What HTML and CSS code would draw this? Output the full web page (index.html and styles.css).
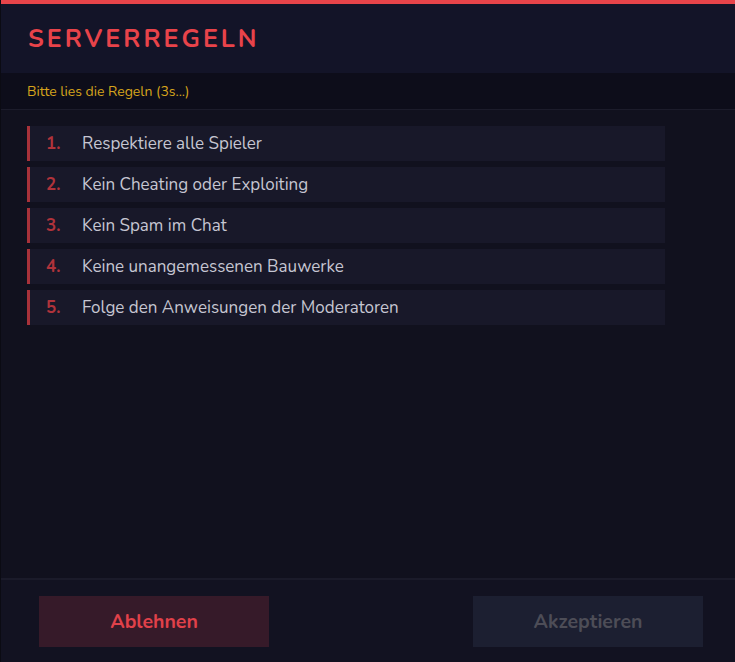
FILE: index.html
```html
<!DOCTYPE html>
<html lang="de">
<head>
<meta charset="utf-8">
<title>Serverregeln</title>
<link rel="stylesheet" href="styles.css">
</head>
<body>
<div class="panel">
  <div class="topbar"></div>
  <header class="header">
    <h1 class="title">SERVERREGELN</h1>
  </header>
  <div class="notice">Bitte lies die Regeln (3s...)</div>
  <main class="rules">
    <div class="rule"><span class="num">1.</span><span class="text">Respektiere alle Spieler</span></div>
    <div class="rule"><span class="num">2.</span><span class="text">Kein Cheating oder Exploiting</span></div>
    <div class="rule"><span class="num">3.</span><span class="text">Kein Spam im Chat</span></div>
    <div class="rule"><span class="num">4.</span><span class="text">Keine unangemessenen Bauwerke</span></div>
    <div class="rule"><span class="num">5.</span><span class="text">Folge den Anweisungen der Moderatoren</span></div>
  </main>
  <footer class="footer">
    <button class="btn btn-decline">Ablehnen</button>
    <button class="btn btn-accept" disabled>Akzeptieren</button>
  </footer>
</div>
</body>
</html>
```
FILE: styles.css
```css
* { box-sizing: border-box; }
html, body {
  margin: 0;
  padding: 0;
  background: #11111e;
  font-family: "Nunito", "Lato", "Open Sans", sans-serif;
}
.panel {
  width: 735px;
  height: 662px;
  display: flex;
  flex-direction: column;
  border-left: 1px solid #0b0b13;
  background: #11111e;
}
.topbar {
  height: 4px;
  background: #e8444a;
  flex: none;
}
.header {
  height: 69px;
  flex: none;
  background: #131428;
  display: flex;
  align-items: center;
  padding-left: 27px;
}
.title {
  margin: 0;
  font-size: 25px;
  font-weight: 700;
  letter-spacing: 3px;
  color: #e8434a;
}
.notice {
  height: 37px;
  flex: none;
  background: #0d0d1a;
  border-bottom: 1px solid #1c1c2b;
  display: flex;
  align-items: center;
  padding-left: 26px;
  font-size: 14px;
  color: #d6a41c;
}
.rules {
  flex: 1;
  padding: 16px 70px 0 26px;
  display: flex;
  flex-direction: column;
  gap: 6px;
}
.rule {
  height: 35px;
  background: #181829;
  border-left: 3px solid #a8323a;
  display: flex;
  align-items: center;
  padding-left: 16px;
  font-size: 17px;
}
.num {
  width: 36px;
  font-weight: 700;
  color: #b0333b;
}
.text {
  color: #c6c6d2;
}
.footer {
  height: 84px;
  flex: none;
  border-top: 2px solid #1b1b2a;
  background: #121221;
  display: flex;
  justify-content: space-between;
  align-items: flex-start;
  padding: 16px 32px 0 38px;
}
.btn {
  width: 230px;
  height: 51px;
  border: none;
  font-family: inherit;
  font-size: 19.5px;
  font-weight: 700;
}
.btn-decline {
  background: #361a29;
  color: #e0414a;
}
.btn-accept {
  background: #1c1f31;
  color: #4d4d57;
}
```
